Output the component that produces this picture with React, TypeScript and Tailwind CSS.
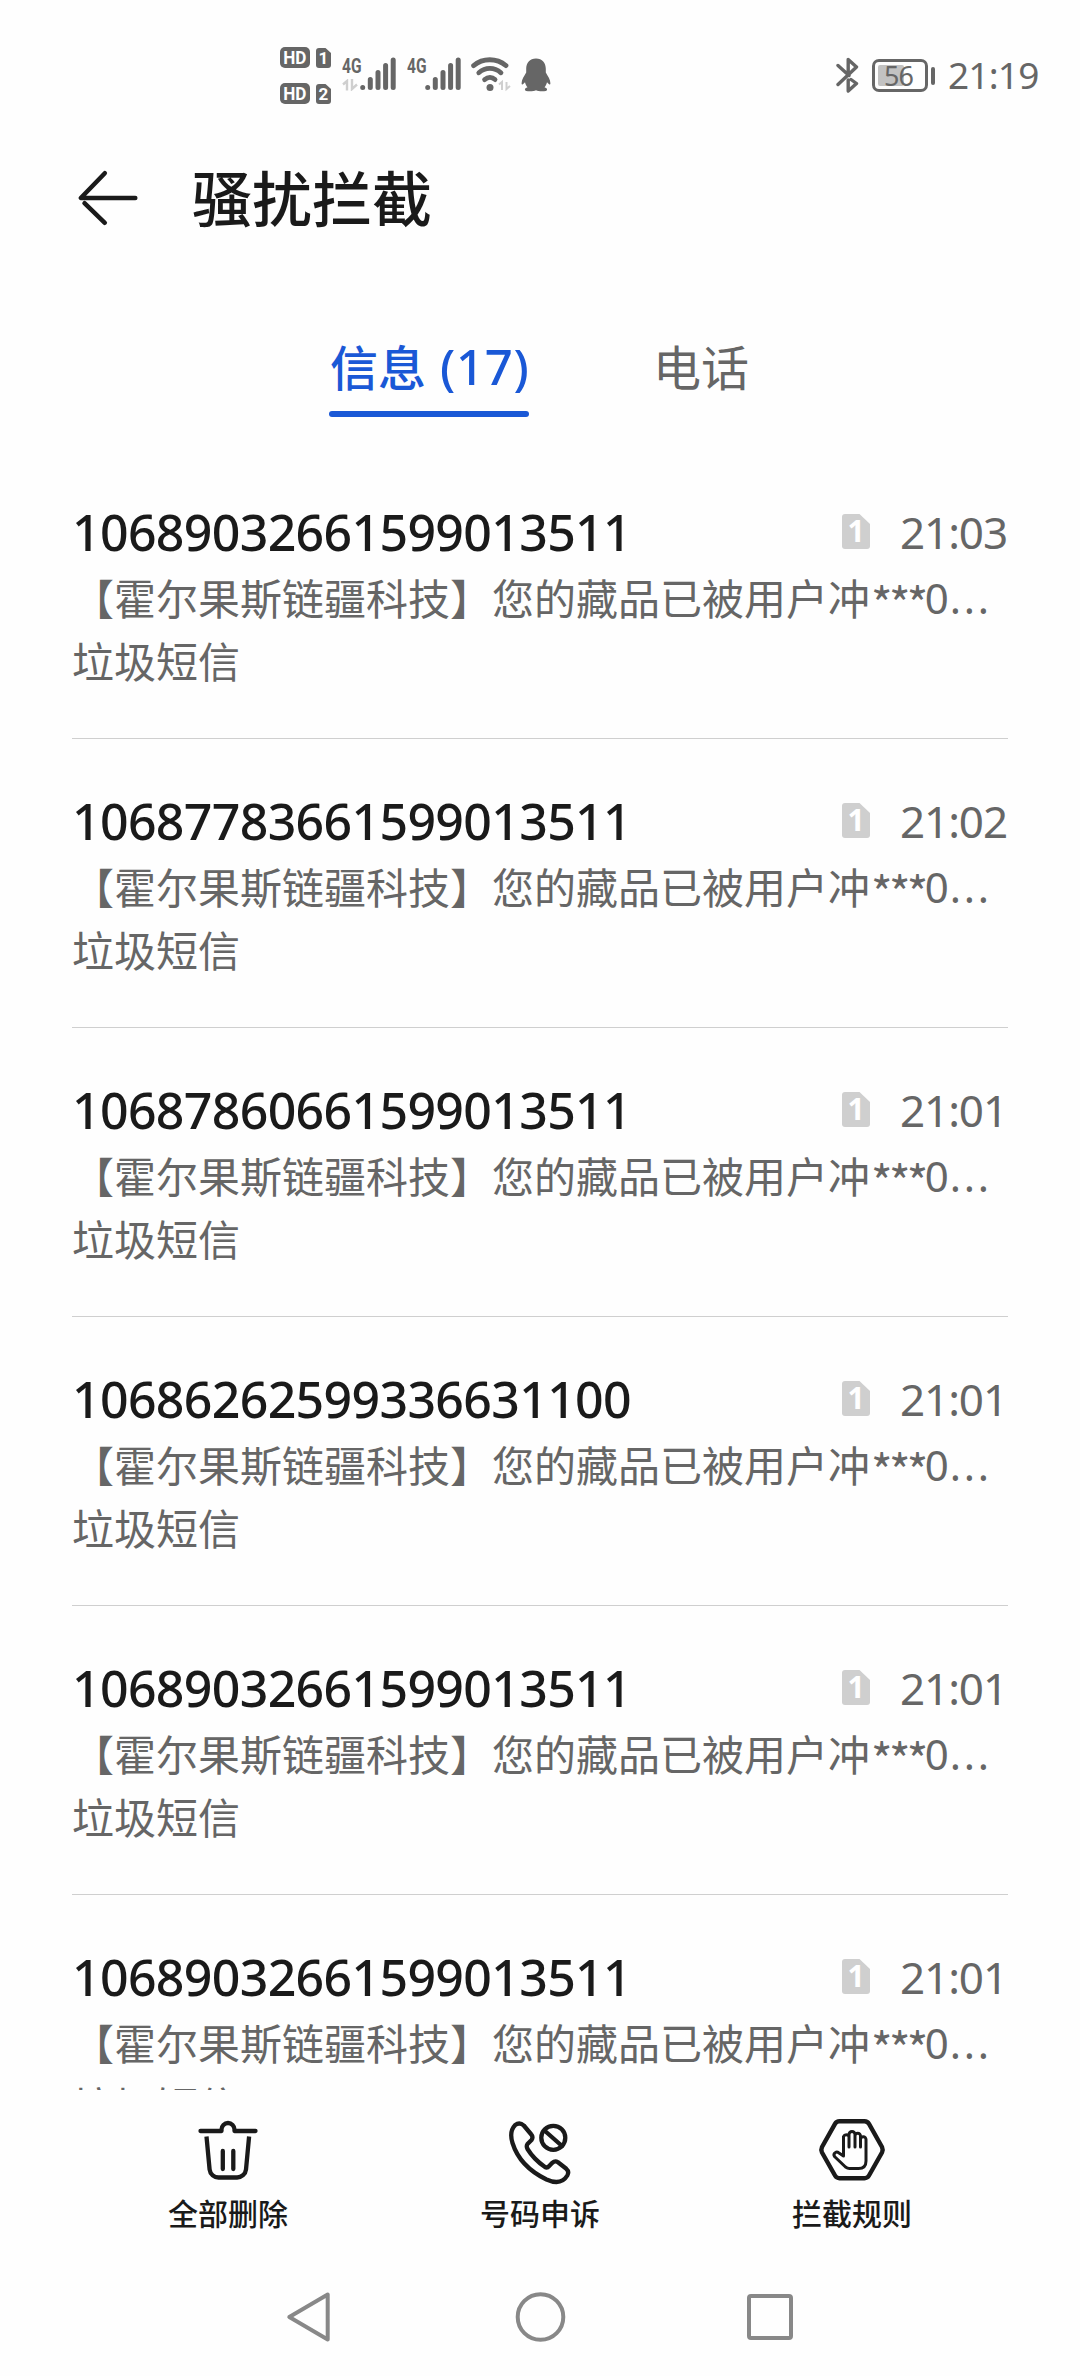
import type { ReactNode } from 'react';

const SANS = "font-['Noto_Sans','Noto_Sans_CJK_SC',sans-serif]";
const CJK = "font-['Noto_Sans_CJK_SC','Noto_Sans',sans-serif]";

type Message = { number: string; time: string };

const messages: Message[] = [
  { number: '10689032661599013511', time: '21:03' },
  { number: '10687783661599013511', time: '21:02' },
  { number: '10687860661599013511', time: '21:01' },
  { number: '10686262599336631100', time: '21:01' },
  { number: '10689032661599013511', time: '21:01' },
  { number: '10689032661599013511', time: '21:01' },
];

function HdRow({ n }: { n: string }) {
  return (
    <div className="flex h-[21px] items-end gap-[6px] font-['Roboto',sans-serif] font-bold text-white">
      <div className="flex h-[21px] w-[30px] items-center justify-center rounded-[5px] bg-[#666] text-[19px] leading-none">
        <span className="scale-x-90">HD</span>
      </div>
      <div className="relative flex h-[20px] w-[15px] items-center justify-center">
        <svg className="absolute inset-0" width="15" height="20" viewBox="0 0 15 20">
          <path d="M3 0h6.5L15 5v12a3 3 0 0 1-3 3H3a3 3 0 0 1-3-3V3a3 3 0 0 1 3-3z" fill="#666" />
        </svg>
        <span className="relative text-[17px] leading-none">{n}</span>
      </div>
    </div>
  );
}

function DataArrows() {
  return (
    <svg width="16" height="12" viewBox="0 0 16 12" fill="none" stroke="#cfcfcf" strokeWidth="2.4">
      <path d="M1 5.5L5 2v9.5M10 0v10l5-4.5" />
    </svg>
  );
}

function Signal({ arrows }: { arrows?: boolean }) {
  return (
    <div className="flex h-[34px] w-[54px] items-end">
      <div className="flex h-[34px] w-[18px] flex-col justify-between pt-px">
        <span className="h-[17px] origin-left scale-x-[0.74] font-['Roboto',sans-serif] text-[21px] font-bold leading-[17px] text-[#666]">
          4G
        </span>
        {arrows && <DataArrows />}
      </div>
      <svg width="36" height="34" viewBox="0 0 36 34" stroke="#666" strokeWidth="5" strokeLinecap="round">
        <path d="M2.7 30.4v.1M10.3 22.5v8M18 15.5v15M25.6 8.5v22M33.2 2.9v27.6" />
      </svg>
    </div>
  );
}

function StatusBar() {
  return (
    <div className={`flex h-[150px] items-start justify-between pl-[280px] pr-[42px] ${SANS}`}>
      <div className="flex pt-[47px]">
        <div className="flex flex-col gap-[15px]">
          <HdRow n="1" />
          <HdRow n="2" />
        </div>
        <div className="ml-[11px] mt-[10px] flex gap-[11px]">
          <Signal arrows />
          <Signal />
        </div>
        <svg className="ml-[10px] mt-[10px]" width="40" height="35" viewBox="0 0 40 35" fill="none">
          <g stroke="#666" strokeWidth="4.8" strokeLinecap="round">
            <path d="M2.6 8.6C12 .8 25.400 .8 35 8.600" />
            <path d="M7.800 15.800C14.400 10 23.200 10 30 15.800" />
            <path d="M13.600 22.600C17 19.800 21 19.800 24 22.600" />
          </g>
          <circle cx="19" cy="30.400" r="3.500" fill="#666" />
          <path d="M28 27.500L31 25v8M35.500 25v7l3.500-3" stroke="#cfcfcf" strokeWidth="2" />
        </svg>
        <svg className="ml-[10px] mt-[11px]" width="30" height="34" viewBox="0 0 30 34" fill="#666">
          <path d="M15 .5c-6.300 0-9.800 4.700-9.800 10.200v3.800C3.200 18 .6 21.500 .6 25.300c0 1.500 1.100 1.600 1.900.5.5-.6 1-1.200 1.500-1.500.5 2 1.300 3.700 2.500 5-1.600.5-2.600 1.200-2.600 2.200 0 1.500 2 1.800 5 1.800 2.700 0 4.600-.4 6.100-1.100 1.500.7 3.400 1.100 6.100 1.100 3 0 5-.3 5-1.800 0-1-1-1.700-2.600-2.200 1.200-1.300 2-3 2.500-5 .5.3 1 .9 1.500 1.500.8 1.100 1.900 1 1.900-.5 0-3.800-2.600-7.300-4.600-10.800v-3.800C24.800 5.200 21.300.5 15 .5z" />
        </svg>
      </div>
      <div className="flex pt-[57px] text-[#666]">
        <svg width="24" height="37" viewBox="0 0 24 37" fill="none" stroke="#666" strokeWidth="3.400" strokeLinecap="round" strokeLinejoin="round">
          <path d="M2 8.500L13 18.500M2 27.500L20.500 10 12.200 2.500V17M15 22.500L20.500 26.500 12.200 34V23" />
        </svg>
        <div className="ml-[12px] mt-[2px] flex h-[33px] items-center gap-[3px]">
          <div className="relative flex h-[33px] w-[56px] items-center justify-center rounded-[7px] border-[3px] border-[#666]">
            <div className="absolute left-[3px] top-[3px] h-[21px] w-[26px] rounded-[2px] bg-[#c2c2c2]" />
            <span className="relative -ml-[3px] text-[27px] leading-none tracking-[-1px]">56</span>
          </div>
          <div className="h-[18px] w-[4px] rounded-[2px] bg-[#666]" />
        </div>
        <span className="ml-[13px] mt-[-2px] w-[90px] text-[37px] leading-[40px] tracking-[-0.800px]">21:19</span>
      </div>
    </div>
  );
}

function Header() {
  return (
    <header className="flex h-[100px] items-center pl-[76px]">
      <svg width="64" height="60" viewBox="0 0 64 60" fill="none" stroke="#1a1a1a" strokeWidth="4.500" strokeLinecap="round" strokeLinejoin="round">
        <path d="M28.800 3.200L4.800 28h54.500M28.800 52.800L8.500 33.200" />
      </svg>
      <h1 className={`mb-[9px] ml-[52px] text-[60px] font-medium leading-none text-[#1a1a1a] ${CJK}`}>骚扰拦截</h1>
    </header>
  );
}

function Tabs() {
  return (
    <nav className={`flex h-[174px] pl-[329px] pt-[82px] text-[48px] leading-[66px] ${CJK}`}>
      <div className="w-[200px] text-[#1a58d6]">
        <div className="flex h-[79px] whitespace-nowrap pl-[1px] font-medium">
          信息
          <span className={`ml-[14px] pt-[1px] text-[49px] tracking-[0.700px] ${SANS}`}>(17)</span>
        </div>
        <div className="h-[6px] w-[200px] rounded-full bg-[#1a58d6]" />
      </div>
      <div className="ml-[124px] text-[#666]">电话</div>
    </nav>
  );
}

function SimBadge() {
  return (
    <div className="relative mb-[2px] flex h-[35px] w-[28px] items-center justify-center">
      <svg className="absolute inset-0" width="28" height="35" viewBox="0 0 28 35">
        <path d="M3 0h14.500L28 10v22a3 3 0 0 1-3 3H3a3 3 0 0 1-3-3V3a3 3 0 0 1 3-3z" fill="#cfcfcf" />
      </svg>
      <span className={`relative text-[30px] font-bold leading-none text-white ${SANS}`}>1</span>
    </div>
  );
}

function MessageRow({ number, time }: Message) {
  return (
    <li className="h-[289px] shrink-0 border-b-[1.500px] border-[#cfcfcf] pt-[48px] text-[#666]">
      <div className={`flex h-[68px] items-center ${SANS}`}>
        <span className="flex-1 text-[50px] font-medium leading-[66px] tracking-[-0.650px] text-[#1a1a1a]">{number}</span>
        <SimBadge />
        <span className="ml-[30px] w-[108px] whitespace-nowrap text-[44px] leading-[66px] tracking-[-1.100px]">{time}</span>
      </div>
      <div className={`flex h-[63px] whitespace-nowrap text-[42px] leading-[62px] ${CJK}`}>
        <span>【霍尔果斯链疆科技】您的藏品已被用户冲</span>
        <span className="ml-[1px] pt-[5px] text-[46px] tracking-[-3.600px]">***</span>
        <span className={`pt-[1px] ${SANS}`}>0</span>
        <span className={`ml-[1px] pt-[1px] tracking-[2.800px] ${SANS}`}>...</span>
      </div>
      <div className={`h-[62px] text-[42px] leading-[62px] ${CJK}`}>垃圾短信</div>
    </li>
  );
}

function Action({ label, children }: { label: string; children: ReactNode }) {
  return (
    <button className={`flex w-[312px] flex-col items-center text-[30px] font-medium leading-[44px] text-[#1a1a1a] ${CJK}`}>
      {children}
      <span className="mt-[2px]">{label}</span>
    </button>
  );
}

function BottomBar() {
  return (
    <footer className="flex h-[180px] px-[72px] pt-[26px]">
      <Action label="全部删除">
        <svg width="72" height="72" viewBox="0 0 72 72" fill="none" stroke="#1a1a1a" strokeWidth="4.300" strokeLinecap="round">
          <path d="M8.500 15h21v-1.500a6.500 6.500 0 0 1 13 0V15h21" strokeLinejoin="round" />
          <path d="M14.500 20.500l3.100 33A9 9 0 0 0 27 61.500h18a9 9 0 0 0 9-8l3.100-33" strokeLinecap="butt" />
          <path d="M30.800 35v18M41.300 35v18" />
        </svg>
      </Action>
      <Action label="号码申诉">
        <svg width="72" height="72" viewBox="0 0 72 72" fill="none" stroke="#1a1a1a" strokeWidth="4.300" strokeLinecap="round" strokeLinejoin="round">
          <path d="M11 9.200Q15.500 5.500 19.800 9.500L27.300 18.500Q29.500 21 27.500 24L23.500 28Q22 30 23.500 33Q30 43.500 41 51Q43.200 52.200 45.200 50L48.300 46.800Q51 44.300 54 46.200L62.300 52.800Q65.500 55.500 63.300 59.500Q57 70 42.500 63.500C26 55.500 13.500 43 8.500 27Q5 15.500 11 9.200Z" />
          <circle cx="49.300" cy="21.800" r="12" />
          <path d="M41 15l17 15" />
        </svg>
      </Action>
      <Action label="拦截规则">
        <svg width="72" height="72" viewBox="0 0 72 72" fill="none" stroke="#1a1a1a" strokeLinecap="round" strokeLinejoin="round">
          <path strokeWidth="4.400" d="M23.500 5.200H48.500Q51.500 5.200 53 7.800L66 31Q67.300 33.800 66 36.500L53 59.500Q51.500 62.200 48.500 62.200H23.500Q20.500 62.200 19 59.500L6 36.500Q4.700 33.800 6 31L19 7.800Q20.500 5.200 23.500 5.200Z" />
          <path strokeWidth="3" d="M27.500 40V20.500a3 3 0 0 1 5.500 0V31M33 31V18.500a3 3 0 0 1 6 0V31M39 20a2.700 2.700 0 0 1 5.500 0V31M44.500 23.500a2.700 2.700 0 0 1 5.500 0V45Q50 52.500 42.500 52.500H33.500Q31.500 52.500 29.500 51L18.500 40.500Q17 38 19.500 36.500Q21 35.500 23 37L27.500 40" />
        </svg>
      </Action>
    </footer>
  );
}

function SystemNav() {
  return (
    <div className="flex h-[106px] items-start justify-between pl-[286px] pr-[287px] pt-[21px]">
      <svg width="46" height="52" viewBox="0 0 46 52" fill="none" stroke="#888" strokeWidth="4" strokeLinejoin="round">
        <path d="M41.700 3.500v45L3.300 26z" />
      </svg>
      <svg width="52" height="52" viewBox="0 0 52 52" fill="none" stroke="#888" strokeWidth="4">
        <circle cx="26.500" cy="26" r="22.800" />
      </svg>
      <div className="mt-[3px] h-[46px] w-[46px] rounded-[4px] border-4 border-[#888]" />
    </div>
  );
}

export default function App() {
  return (
    <div className="flex h-[2376px] w-[1080px] flex-col overflow-hidden bg-[#fefefe]">
      <StatusBar />
      <Header />
      <Tabs />
      <div className="h-[1666px] overflow-hidden px-[72px] pt-[26px]">
        <ul className="flex flex-col">
          {messages.map((m, i) => (
            <MessageRow key={i} {...m} />
          ))}
        </ul>
      </div>
      <BottomBar />
      <SystemNav />
    </div>
  );
}
